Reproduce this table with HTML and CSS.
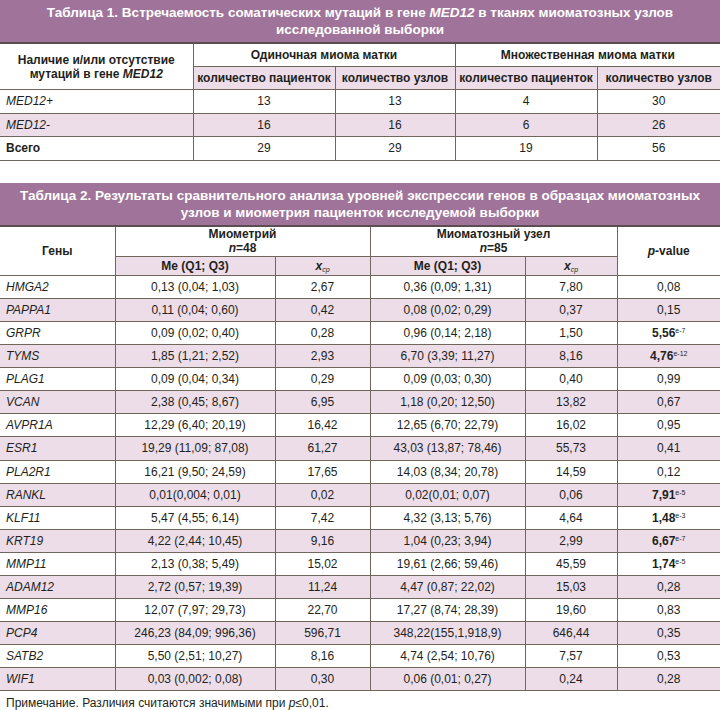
FILE: index.html
```html
<!DOCTYPE html>
<html lang="ru">
<head>
  <meta charset="UTF-8" />
  <title>Таблицы MED12</title>
  <link rel="stylesheet" href="styles.css">
</head>
<body>

<div class="title">Таблица 1. Встречаемость соматических мутаций в гене <i>MED12</i> в тканях миоматозных узлов<br>исследованной выборки</div>
<table class="t1">
  <colgroup>
    <col style="width:193px"><col style="width:142px"><col style="width:120px"><col style="width:142px"><col>
  </colgroup>
  <tr>
    <th rowspan="2">Наличие и/или отсутствие<br>мутаций в гене <i>MED12</i></th>
    <th colspan="2">Одиночная миома матки</th>
    <th colspan="2">Множественная миома матки</th>
  </tr>
  <tr class="sub">
    <th>количество пациенток</th>
    <th>количество узлов</th>
    <th>количество пациенток</th>
    <th>количество узлов</th>
  </tr>
  <tr><td class="name"><i>MED12+</i></td><td>13</td><td>13</td><td>4</td><td>30</td></tr>
  <tr class="alt"><td class="name"><i>MED12-</i></td><td>16</td><td>16</td><td>6</td><td>26</td></tr>
  <tr><td class="name"><b>Всего</b></td><td>29</td><td>29</td><td>19</td><td>56</td></tr>
</table>

<div class="title second">Таблица 2. Результаты сравнительного анализа уровней экспрессии генов в образцах миоматозных<br>узлов и миометрия пациенток исследуемой выборки</div>
<table class="t2">
  <colgroup>
    <col style="width:115px"><col style="width:160px"><col style="width:95px"><col style="width:155px"><col style="width:92px"><col>
  </colgroup>
  <tr class="group">
    <th rowspan="2">Гены</th>
    <th colspan="2">Миометрий<br><i>n</i>=48</th>
    <th colspan="2">Миоматозный узел<br><i>n</i>=85</th>
    <th rowspan="2"><i>p</i>-value</th>
  </tr>
  <tr class="sub">
    <th>Me (Q1; Q3)</th>
    <th><i>x</i><sub>ср</sub></th>
    <th>Me (Q1; Q3)</th>
    <th><i>x</i><sub>ср</sub></th>
  </tr>
  <tr><td class="name"><i>HMGA2</i></td><td>0,13 (0,04; 1,03)</td><td>2,67</td><td>0,36 (0,09; 1,31)</td><td>7,80</td><td>0,08</td></tr>
  <tr class="alt"><td class="name"><i>PAPPA1</i></td><td>0,11 (0,04; 0,60)</td><td>0,42</td><td>0,08 (0,02; 0,29)</td><td>0,37</td><td>0,15</td></tr>
  <tr><td class="name"><i>GRPR</i></td><td>0,09 (0,02; 0,40)</td><td>0,28</td><td>0,96 (0,14; 2,18)</td><td>1,50</td><td><b>5,56</b><sup>e-7</sup></td></tr>
  <tr class="alt"><td class="name"><i>TYMS</i></td><td>1,85 (1,21; 2,52)</td><td>2,93</td><td>6,70 (3,39; 11,27)</td><td>8,16</td><td><b>4,76</b><sup>e-12</sup></td></tr>
  <tr><td class="name"><i>PLAG1</i></td><td>0,09 (0,04; 0,34)</td><td>0,29</td><td>0,09 (0,03; 0,30)</td><td>0,40</td><td>0,99</td></tr>
  <tr class="alt"><td class="name"><i>VCAN</i></td><td>2,38 (0,45; 8,67)</td><td>6,95</td><td>1,18 (0,20; 12,50)</td><td>13,82</td><td>0,67</td></tr>
  <tr><td class="name"><i>AVPR1A</i></td><td>12,29 (6,40; 20,19)</td><td>16,42</td><td>12,65 (6,70; 22,79)</td><td>16,02</td><td>0,95</td></tr>
  <tr class="alt"><td class="name"><i>ESR1</i></td><td>19,29 (11,09; 87,08)</td><td>61,27</td><td>43,03 (13,87; 78,46)</td><td>55,73</td><td>0,41</td></tr>
  <tr><td class="name"><i>PLA2R1</i></td><td>16,21 (9,50; 24,59)</td><td>17,65</td><td>14,03 (8,34; 20,78)</td><td>14,59</td><td>0,12</td></tr>
  <tr class="alt"><td class="name"><i>RANKL</i></td><td>0,01(0,004; 0,01)</td><td>0,02</td><td>0,02(0,01; 0,07)</td><td>0,06</td><td><b>7,91</b><sup>e-5</sup></td></tr>
  <tr><td class="name"><i>KLF11</i></td><td>5,47 (4,55; 6,14)</td><td>7,42</td><td>4,32 (3,13; 5,76)</td><td>4,64</td><td><b>1,48</b><sup>e-3</sup></td></tr>
  <tr class="alt"><td class="name"><i>KRT19</i></td><td>4,22 (2,44; 10,45)</td><td>9,16</td><td>1,04 (0,23; 3,94)</td><td>2,99</td><td><b>6,67</b><sup>e-7</sup></td></tr>
  <tr><td class="name"><i>MMP11</i></td><td>2,13 (0,38; 5,49)</td><td>15,02</td><td>19,61 (2,66; 59,46)</td><td>45,59</td><td><b>1,74</b><sup>e-5</sup></td></tr>
  <tr class="alt"><td class="name"><i>ADAM12</i></td><td>2,72 (0,57; 19,39)</td><td>11,24</td><td>4,47 (0,87; 22,02)</td><td>15,03</td><td>0,28</td></tr>
  <tr><td class="name"><i>MMP16</i></td><td>12,07 (7,97; 29,73)</td><td>22,70</td><td>17,27 (8,74; 28,39)</td><td>19,60</td><td>0,83</td></tr>
  <tr class="alt"><td class="name"><i>PCP4</i></td><td>246,23 (84,09; 996,36)</td><td>596,71</td><td>348,22(155,1,918,9)</td><td>646,44</td><td>0,35</td></tr>
  <tr><td class="name"><i>SATB2</i></td><td>5,50 (2,51; 10,27)</td><td>8,16</td><td>4,74 (2,54; 10,76)</td><td>7,57</td><td>0,53</td></tr>
  <tr class="alt"><td class="name"><i>WIF1</i></td><td>0,03 (0,002; 0,08)</td><td>0,30</td><td>0,06 (0,01; 0,27)</td><td>0,24</td><td>0,28</td></tr>
</table>

<p class="note">Примечание. Различия считаются значимыми при <i>p</i>≤0,01.</p>

</body>
</html>
```

FILE: styles.css
```css
body {
  margin: 0;
  width: 720px;
  font-family: 'Liberation Sans', Arial, sans-serif;
  font-size: 12px;
  color: #231f20;
  background: #ffffff;
}
.title {
  background: #a0749a;
  color: #fff;
  font-weight: bold;
  font-size: 13.5px;
  line-height: 17px;
  text-align: center;
  padding: 4px 0;
  border-bottom: 2px solid #5c4d53;
}
.title.second {
  margin-top: 22px;
}
table {
  width: 720px;
  border-collapse: collapse;
  table-layout: fixed;
}
th, td {
  border: 1px solid #71665c;
  height: 22px;
  padding: 0 6px;
  text-align: center;
  line-height: 14px;
}
th {
  font-weight: bold;
  white-space: nowrap;
}
.sub th {
  padding: 0 2px;
}
tr > :first-child {
  border-left: none;
}
tr > :last-child {
  border-right: none;
}
tr.sub > :first-child {
  border-left: 1px solid #71665c;
}
.t1 tr:first-child th {
  border-top: none;
}
.t1 td {
  height: 22.6px;
}
.t2 tr.group th {
  border-top: none;
  height: 29px;
}
.t2 tr.sub th {
  height: 18px;
}
.t2 td {
  height: 22.1px;
}
.sub th, tr.alt td {
  background: #ecdde9;
}
td.name {
  text-align: left;
}
sub {
  font-size: 7px;
  line-height: 0;
  vertical-align: -2px;
  font-weight: normal;
  font-style: italic;
}
sup {
  font-size: 7px;
  line-height: 0;
  vertical-align: 4px;
}
.note {
  margin: 5px 0 0;
  padding-left: 6px;
  font-size: 12px;
  line-height: 14px;
}
```
